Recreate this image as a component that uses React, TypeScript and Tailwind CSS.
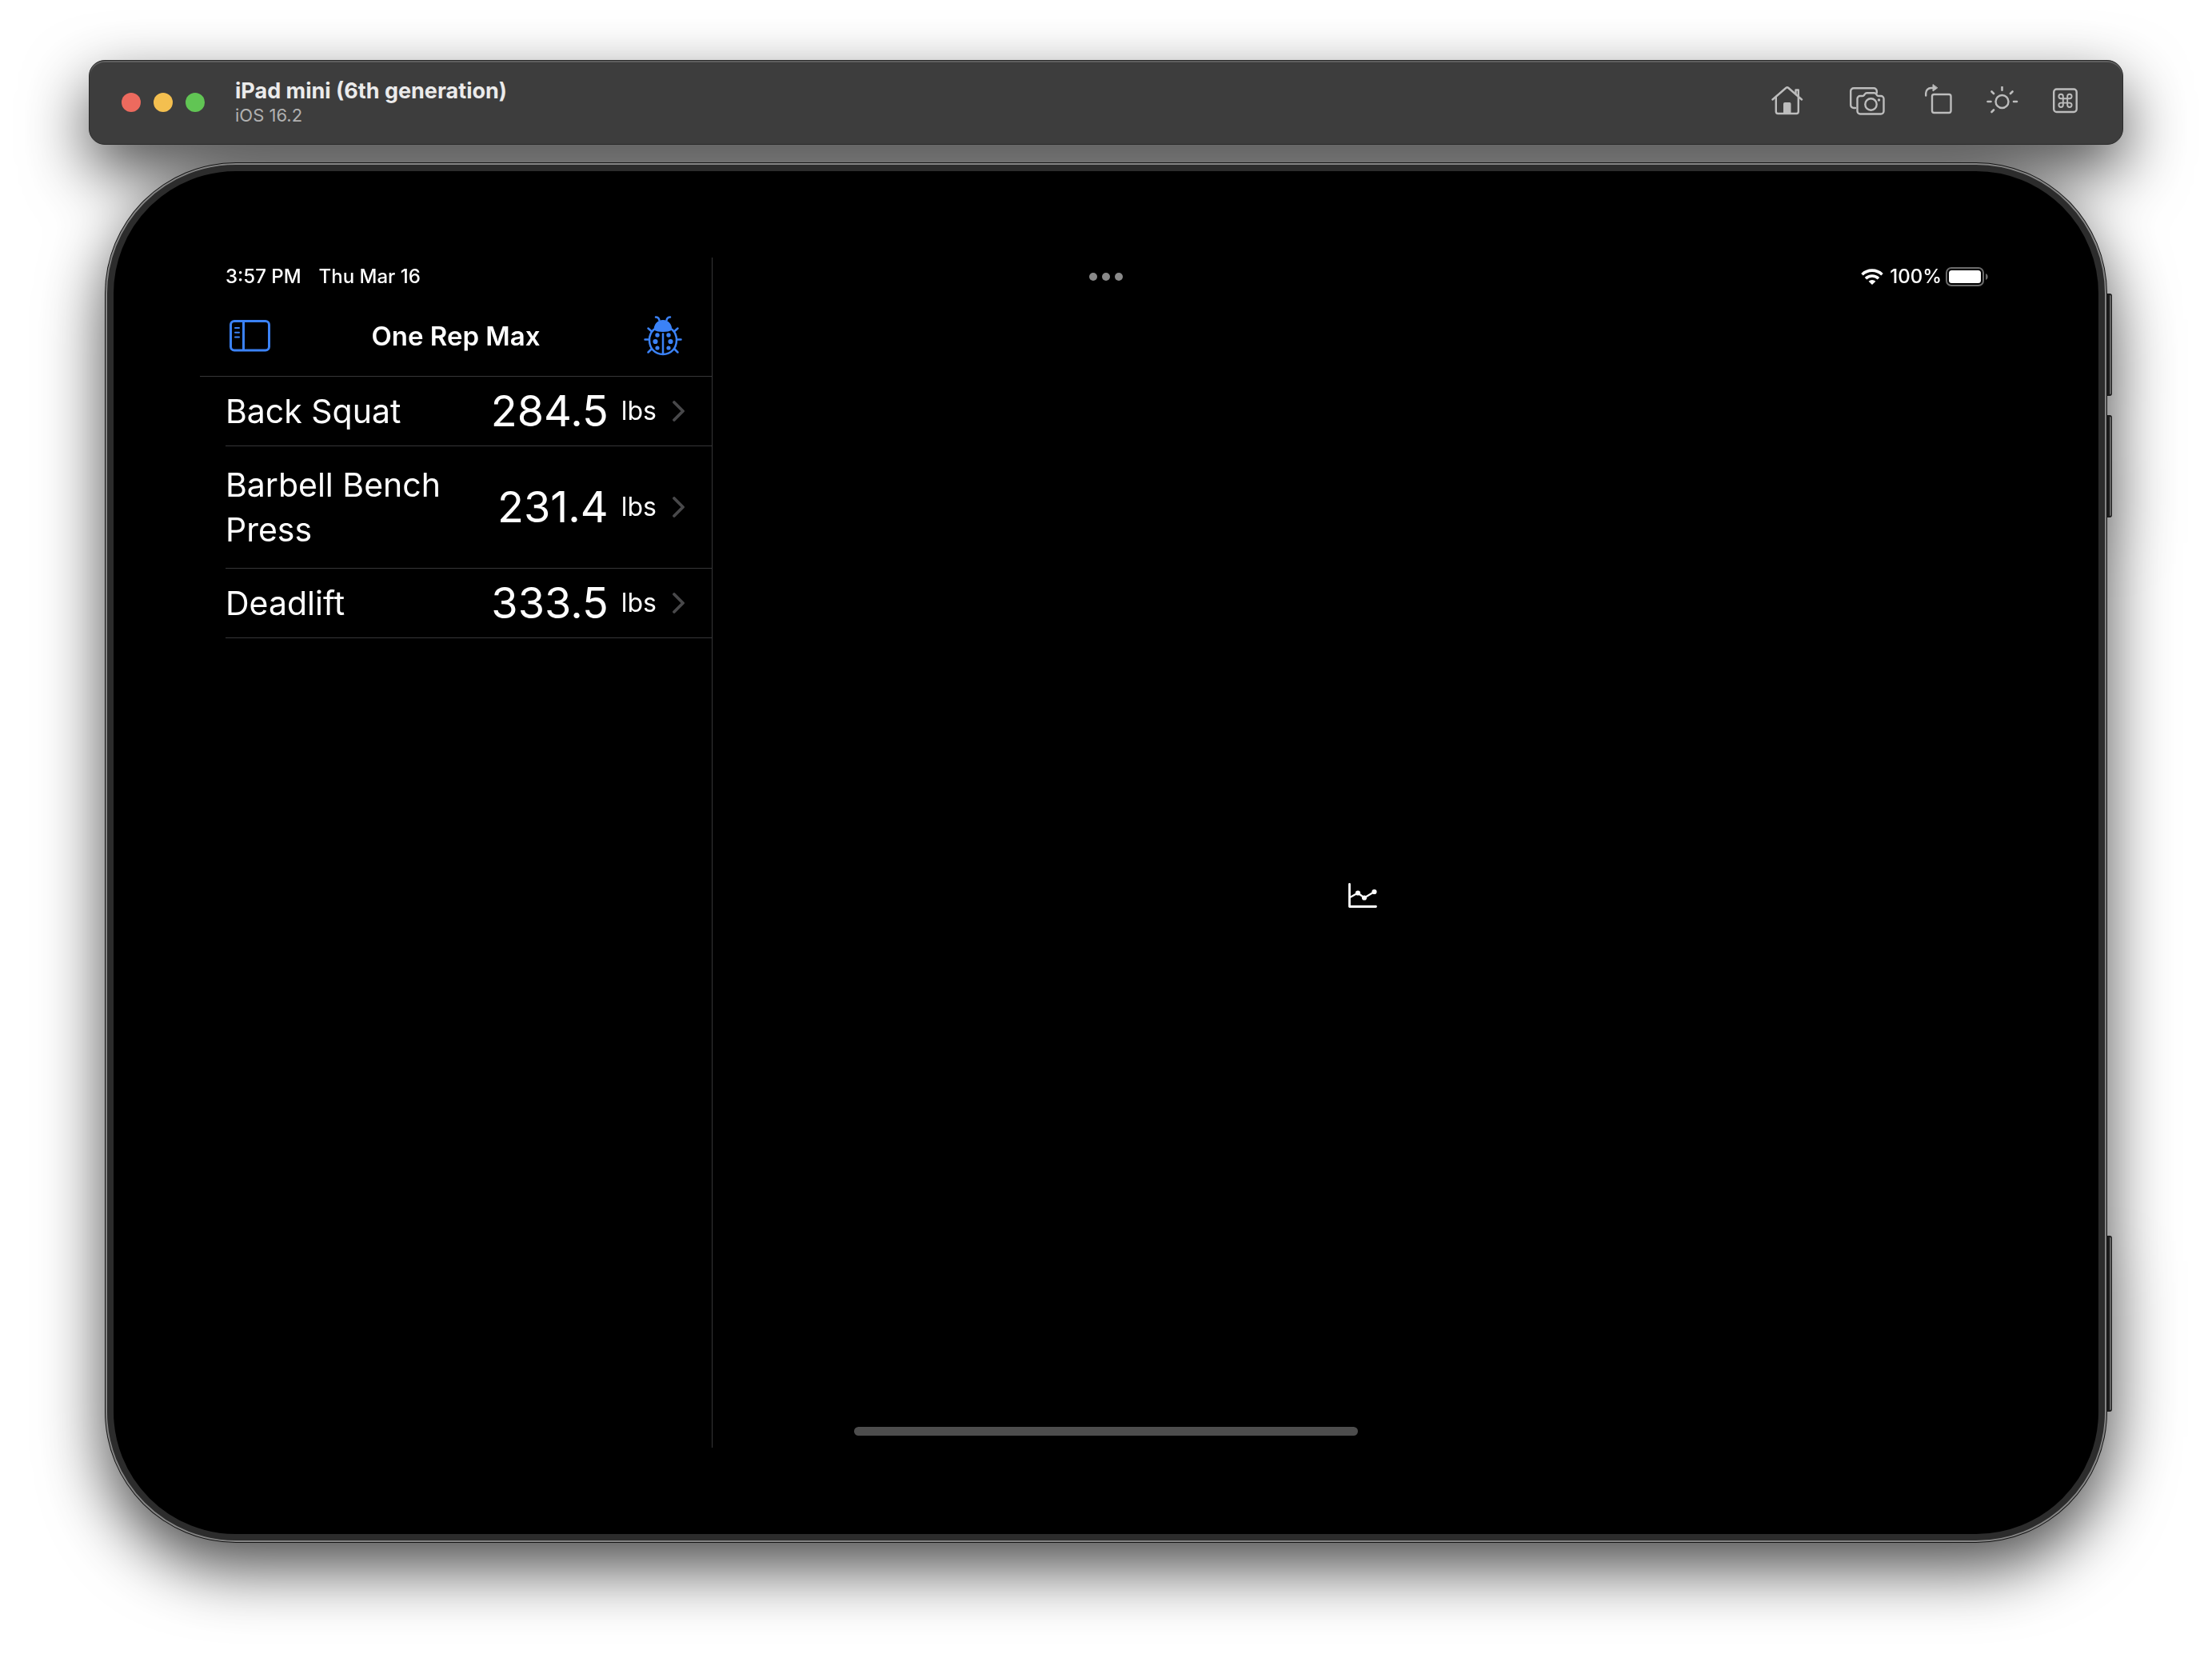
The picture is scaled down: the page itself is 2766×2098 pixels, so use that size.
import type { ReactNode } from "react";

type Lift = { name: string; max: string; tall?: boolean };

const lifts: Lift[] = [
  { name: "Back Squat", max: "284.5" },
  { name: "Barbell Bench Press", max: "231.4", tall: true },
  { name: "Deadlift", max: "333.5" },
];

function HomeIcon() {
  return (
    <svg width="40" height="36" viewBox="0 0 40 36" fill="none" stroke="currentColor" strokeWidth="2.400" strokeLinecap="round" strokeLinejoin="round">
      <path d="M1.500 16.500 18.200 2c1-.8 2.300-.8 3.200 0L38 16.500" />
      <path d="M5.800 14v17.500A2.500 2.500 0 0 0 8.300 34h23a2.500 2.500 0 0 0 2.500-2.500V14" />
      <path d="M30.500 9V4.500h3.300v8" />
      <path d="M15.500 33.500V21.500a1 1 0 0 1 1-1H23a1 1 0 0 1 1 1v12z" fill="currentColor" strokeWidth="1" />
    </svg>
  );
}

function ScreenshotIcon() {
  return (
    <svg width="44" height="36" viewBox="0 0 44 36" fill="none" stroke="currentColor" strokeWidth="2.400" strokeLinecap="round" strokeLinejoin="round">
      <path d="M7 27H5a3.800 3.800 0 0 1-3.800-3.800V6A3.800 3.800 0 0 1 5 2.200h25A3.800 3.800 0 0 1 33.800 6v2" />
      <path d="M13 12h3c1 0 1.600-.4 2.100-1.200l1-1.400c.6-.9 1.300-1.200 2.300-1.200h9.200c1 0 1.700.3 2.300 1.200l1 1.400c.5.800 1.100 1.200 2.100 1.200h3a3.500 3.500 0 0 1 3.500 3.500V31a3.500 3.500 0 0 1-3.500 3.500H13A3.500 3.500 0 0 1 9.500 31V15.500A3.500 3.500 0 0 1 13 12z" />
      <circle cx="26.500" cy="22.500" r="7.200" />
      <circle cx="36.500" cy="17" r="1.700" fill="currentColor" stroke="none" />
    </svg>
  );
}

function RotateIcon() {
  return (
    <svg width="34" height="42" viewBox="0 0 34 42" fill="none" stroke="currentColor" strokeWidth="2.400" strokeLinecap="round" strokeLinejoin="round">
      <rect x="9" y="13" width="23.500" height="23" rx="2.500" />
      <path d="M1.200 14.500v-3A6.500 6.500 0 0 1 7.700 5H10" />
      <path d="M10 1v8l5.500-4z" fill="currentColor" strokeWidth="1" />
    </svg>
  );
}

function AppearanceIcon() {
  return (
    <svg width="40" height="36" viewBox="0 1 40 36" fill="none" stroke="currentColor" strokeWidth="2.600" strokeLinecap="round">
      <circle cx="19.500" cy="20" r="8" strokeWidth="2.400" />
      <path d="M19.500 1.800v4M1.500 20h4M34 20h4M6.500 7.500l2.500 2.500M32.500 7.500L30 10M6.500 33L9 30.500" />
    </svg>
  );
}

function CommandIcon() {
  return (
    <svg width="31" height="32" viewBox="0 0 31 32" fill="none" stroke="currentColor" strokeWidth="2.400">
      <rect x="1.200" y="1.500" width="28.500" height="28.500" rx="3.500" />
      <path d="M12.800 13.200v-2.700a2.700 2.700 0 1 0-2.700 2.700h10.800a2.700 2.700 0 1 0-2.700-2.700v10.800a2.700 2.700 0 1 0 2.700-2.700H10.100a2.700 2.700 0 1 0 2.700 2.700v-8.100" strokeWidth="1.900" />
    </svg>
  );
}

function SidebarIcon() {
  return (
    <svg width="51" height="40" viewBox="0 0 51 40" fill="none" stroke="currentColor" strokeLinecap="round">
      <rect x="1.500" y="1.500" width="48" height="36.500" rx="4.500" strokeWidth="3" />
      <path d="M17.500 2v36" strokeWidth="3" strokeLinecap="butt" />
      <path d="M7 10h5M7 15.800h5M7 21.500h5" strokeWidth="2" />
    </svg>
  );
}

function LadybugIcon() {
  return (
    <svg width="48" height="50" viewBox="0 0 48 50" fill="none" stroke="currentColor" strokeWidth="2.500" strokeLinecap="round">
      <path d="M15 1.500c3 0 4 1.500 4.500 4M33 1.500c-3 0-4 1.500-4.500 4" />
      <path d="M12.600 17.500C12.600 10 17.500 5 24 5s11.400 5 11.400 12.500c-2.500 1.700-6.500 2.500-11.400 2.500s-8.900-.8-11.400-2.500z" fill="currentColor" stroke="none" />
      <path d="M12.600 17C9.300 20 7 24.500 7 30c0 10.500 7 18 17 18s17-7.500 17-18c0-5.500-2.300-10-5.600-13" />
      <path d="M24 22.500V47" />
      <path d="M1.500 29.500H6M42 29.500h4.500M5.500 15.500l4.500 4M42.500 15.500l-4.500 4M5.500 45.500l4-4M42.500 45.500l-4-4" />
      <g fill="currentColor" stroke="none">
        <circle cx="17" cy="24" r="2.700" />
        <circle cx="31" cy="24" r="2.700" />
        <circle cx="14.500" cy="32" r="3.100" />
        <circle cx="33.500" cy="32" r="3.100" />
        <circle cx="17" cy="40" r="2.600" />
        <circle cx="31" cy="40" r="2.600" />
      </g>
    </svg>
  );
}

function WifiIcon() {
  return (
    <svg width="28" height="20" viewBox="0 0 28 20" fill="none" stroke="currentColor" strokeWidth="3.600">
      <path d="M1.500 7.200a18 18 0 0 1 25 0" />
      <path d="M6 12.200a11.500 11.500 0 0 1 16 0" />
      <path d="M14 20l-4.400-4.200a6.200 6.200 0 0 1 8.800 0z" fill="currentColor" stroke="none" />
    </svg>
  );
}

function BatteryIcon() {
  return (
    <svg width="53" height="24" viewBox="0 0 53 24" fill="none">
      <rect x="1" y="1" width="46" height="22" rx="6" stroke="#6b6b6b" strokeWidth="2" />
      <rect x="4" y="4" width="40" height="16" rx="3.500" fill="#fff" />
      <path d="M50 8c1.800.7 2.700 2.200 2.700 4s-.9 3.300-2.700 4z" fill="#6b6b6b" />
    </svg>
  );
}

function ChartIcon() {
  return (
    <svg width="36" height="32" viewBox="0 0 36 32" fill="none" stroke="currentColor" strokeWidth="2.800" strokeLinecap="round" strokeLinejoin="round">
      <path d="M1.500 1.500v28h33" />
      <path d="M2 18l10-5.500 8 6L32.500 11" strokeWidth="2.200" />
      <g fill="currentColor" stroke="none">
        <circle cx="12" cy="12.500" r="3.100" />
        <circle cx="20" cy="18.500" r="3.100" />
        <circle cx="32.500" cy="11" r="3.100" />
      </g>
    </svg>
  );
}

function ToolbarButton({ label, children }: { label: string; children: ReactNode }) {
  return (
    <button type="button" aria-label={label} className="flex shrink-0 items-center">
      {children}
    </button>
  );
}

function TitleBar() {
  return (
    <header className="flex h-[106px] items-center rounded-[20px] border border-[#2a2a2a] bg-[#3d3d3d] pr-[56px] pl-10 shadow-[inset_0_2px_0_0_#5e5e5e]">
      <div className="flex gap-4">
        <button type="button" aria-label="Close" className="size-6 rounded-full bg-[#ed6a5e]" />
        <button type="button" aria-label="Minimize" className="size-6 rounded-full bg-[#f4bf4f]" />
        <button type="button" aria-label="Zoom" className="size-6 rounded-full bg-[#61c554]" />
      </div>
      <div className="ml-[38px] flex-1">
        <h1 className="text-[27px] leading-8 font-bold text-[#ebebeb]">iPad mini (6th generation)</h1>
        <p className="text-[22px] leading-7 text-[#b1b1b1]">iOS 16.2</p>
      </div>
      <div className="flex items-center pb-1 text-[#bdbdbd]">
        <div className="flex items-center gap-[58px]">
          <ToolbarButton label="Home">
            <HomeIcon />
          </ToolbarButton>
          <ToolbarButton label="Save Screen">
            <ScreenshotIcon />
          </ToolbarButton>
        </div>
        <div className="ml-[50px] flex items-center gap-[43px]">
          <ToolbarButton label="Rotate">
            <RotateIcon />
          </ToolbarButton>
          <ToolbarButton label="Appearance">
            <AppearanceIcon />
          </ToolbarButton>
          <ToolbarButton label="Keyboard shortcuts">
            <CommandIcon />
          </ToolbarButton>
        </div>
      </div>
    </header>
  );
}

function LiftRow({ lift }: { lift: Lift }) {
  return (
    <li className="ml-8 border-b border-[#363638]">
      <a href="#lift" className={`flex min-h-[86px] items-center pr-[34px] ${lift.tall ? "py-5" : ""}`}>
        <span className="min-w-0 flex-1 pr-8 text-[41px] leading-[56px]">{lift.name}</span>
        <span className="text-[54px] leading-[64px]">{lift.max}</span>
        <span className="ml-4 text-[32px] leading-10">lbs</span>
        <svg className="ml-5" width="15" height="26" viewBox="0 0 15 26" fill="none" stroke="#48484a" strokeWidth="3.800" strokeLinecap="round" strokeLinejoin="round">
          <path d="M2 2l11 11L2 24" />
        </svg>
      </a>
    </li>
  );
}

function Sidebar() {
  return (
    <nav className="w-[641px] shrink-0 border-r border-[#363638]">
      <div className="flex h-12 items-center gap-[22px] pl-8 text-[24px] leading-8 font-medium">
        <span>3:57 PM</span>
        <span>Thu Mar 16</span>
      </div>
      <div className="grid h-[101px] grid-cols-[1fr_auto_1fr] items-center border-b border-[#363638] px-[37px]">
        <button type="button" aria-label="Toggle sidebar" className="justify-self-start text-[#3b82f7]">
          <SidebarIcon />
        </button>
        <h2 className="text-[33px] leading-10 font-semibold">One Rep Max</h2>
        <button type="button" aria-label="Debug" className="justify-self-end text-[#3b82f7]">
          <LadybugIcon />
        </button>
      </div>
      <ul>
        {lifts.map((lift) => (
          <LiftRow key={lift.name} lift={lift} />
        ))}
      </ul>
    </nav>
  );
}

function Detail() {
  return (
    <main className="flex flex-1 flex-col">
      <div className="flex h-12 items-center justify-end pr-[30px] text-[24px] leading-8 font-medium">
        <WifiIcon />
        <span className="mr-[5px] ml-2">100%</span>
        <BatteryIcon />
      </div>
      <div className="flex flex-1 items-center justify-center pt-[100px] pb-10">
        <ChartIcon />
      </div>
    </main>
  );
}

function Device() {
  return (
    <div className="relative mx-[23px] mt-[25px] flex flex-1 flex-col">
      <span className="absolute top-[161px] -right-[9px] -z-10 h-32 w-4 rounded-r-[3px] border-2 border-r border-[#1c1c1c] border-l-[13px] bg-[#636363]" />
      <span className="absolute top-[313px] -right-[9px] -z-10 h-32 w-4 rounded-r-[3px] border-2 border-r border-[#1c1c1c] border-l-[13px] bg-[#636363]" />
      <span className="absolute -right-[9px] bottom-[161px] -z-10 h-[220px] w-4 rounded-r-[3px] border-2 border-r border-[#1c1c1c] border-l-[13px] bg-[#636363]" />
      <div className="flex flex-1 rounded-[161px] border-8 border-[#2c2c2c] bg-black p-[108px] shadow-[0_0_0_2px_#858585,0_0_0_3px_#151515]">
        <div className="relative flex flex-1 text-white">
          <Sidebar />
          <Detail />
          <div className="absolute top-[19px] left-1/2 flex -translate-x-1/2 gap-[6px]">
            <span className="size-[10px] rounded-full bg-[#8a8a8a]" />
            <span className="size-[10px] rounded-full bg-[#8a8a8a]" />
            <span className="size-[10px] rounded-full bg-[#8a8a8a]" />
          </div>
          <div className="absolute bottom-[15px] left-1/2 h-[11px] w-[630px] -translate-x-1/2 rounded-full bg-[#4d4d4d]" />
        </div>
      </div>
    </div>
  );
}

export default function App() {
  return (
    <div className="min-h-screen bg-white font-['Inter',sans-serif]">
      <div className="flex min-h-screen flex-col px-[111px] pt-[75px] pb-[172px] [filter:drop-shadow(0_32px_40px_rgba(0,0,0,0.7))]">
        <TitleBar />
        <Device />
      </div>
    </div>
  );
}
